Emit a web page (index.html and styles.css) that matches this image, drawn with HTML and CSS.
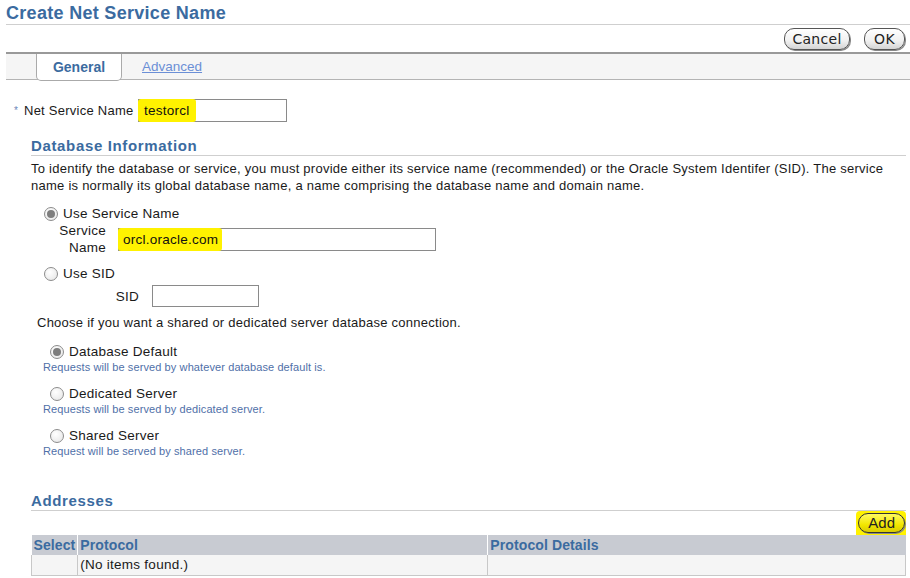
FILE: index.html
```html
<!DOCTYPE html>
<html>
<head>
<meta charset="utf-8">
<title>Create Net Service Name</title>
<link rel="stylesheet" href="styles.css">
</head>
<body>
<div class="page">
  <h1 class="title">Create Net Service Name</h1>
  <div class="actions">
    <button class="btn btn-cancel">Cancel</button>
    <button class="btn btn-ok">OK</button>
  </div>
  <div class="tabs">
    <div class="tab active">General</div>
    <a class="tab link" href="#">Advanced</a>
  </div>

  <div class="nsn-row">
    <span class="req">*</span>
    <span class="nsn-label">Net Service Name</span>
    <div class="field nsn-field"><span class="hl">testorcl</span></div>
  </div>

  <section class="section">
    <h2 class="section-title">Database Information</h2>
    <p class="desc">To identify the database or service, you must provide either its service name (recommended) or the Oracle System Identifer (SID). The service name is normally its global database name, a name comprising the database name and domain name.</p>

    <div class="radio-line first"><span class="radio checked"></span><span>Use Service Name</span></div>
    <div class="labeled svc-row">
      <span class="lbl svc-lbl">Service<br>Name</span>
      <div class="field svc-field"><span class="hl">orcl.oracle.com</span></div>
    </div>

    <div class="radio-line sid-radio"><span class="radio"></span><span>Use SID</span></div>
    <div class="labeled sid-row">
      <span class="lbl sid-lbl">SID</span>
      <div class="field sid-field"></div>
    </div>

    <p class="choose">Choose if you want a shared or dedicated server database connection.</p>

    <div class="opt">
      <div class="radio-line opt-line"><span class="radio checked"></span><span>Database Default</span></div>
      <div class="hint">Requests will be served by whatever database default is.</div>
    </div>
    <div class="opt">
      <div class="radio-line opt-line"><span class="radio"></span><span>Dedicated Server</span></div>
      <div class="hint">Requests will be served by dedicated server.</div>
    </div>
    <div class="opt">
      <div class="radio-line opt-line"><span class="radio"></span><span>Shared Server</span></div>
      <div class="hint">Request will be served by shared server.</div>
    </div>
  </section>

  <section class="section addresses">
    <h2 class="section-title">Addresses</h2>
    <div class="table-actions"><span class="btn-hl"><button class="btn btn-add">Add</button></span></div>
    <table class="grid">
      <thead>
        <tr><th class="c-sel">Select</th><th class="c-proto">Protocol</th><th class="c-det">Protocol Details</th></tr>
      </thead>
      <tbody>
        <tr><td></td><td>(No items found.)</td><td></td></tr>
      </tbody>
    </table>
  </section>
</div>
</body>
</html>
```

FILE: styles.css
```css
* { box-sizing: border-box; }
html, body { margin: 0; padding: 0; background: #fff; }
body {
  font-family: "Liberation Sans", Arial, sans-serif;
  font-size: 13px;
  letter-spacing: 0.25px;
  color: #1a1a1a;
}
.page { padding-left: 6px; width: 910px; }

.title {
  margin: 2px 0 0 0;
  font-size: 18px;
  line-height: 22px;
  font-weight: bold;
  letter-spacing: 0.3px;
  color: #3b6ba0;
  border-bottom: 1px solid #cfcfcf;
}

.actions {
  display: flex;
  justify-content: flex-end;
  gap: 14px;
  margin-top: 3px;
  padding-right: 5px;
  height: 22px;
}
.btn {
  font-family: "DejaVu Sans", sans-serif;
  font-size: 14px;
  letter-spacing: 0.3px;
  line-height: 18px;
  height: 22px;
  padding: 0;
  border: 1px solid #555;
  border-radius: 10px;
  background: linear-gradient(#ffffff, #f0f0f0 60%, #d4d4d4);
  color: #222;
  box-shadow: 1px 1px 0 #888;
}
.btn-cancel { width: 66px; }
.btn-ok { width: 41px; }

.tabs {
  display: flex;
  margin-top: 2px;
  height: 28px;
  border-top: 2px solid #999;
  border-bottom: 1px solid #b4b4b4;
  background: #f5f5f5;
}
.tab {
  height: 26px;
  font-size: 14px;
  line-height: 26px;
}
.tab.active {
  margin-left: 30px;
  width: 86px;
  margin-bottom: -1px;
  height: 27px;
  background: #fff;
  border: 1px solid #aaa;
  border-top: none;
  border-radius: 0 0 5px 5px;
  text-align: center;
  font-weight: bold;
  letter-spacing: 0;
  color: #3b6ba0;
}
.tab.link {
  margin-left: 20px;
  font-size: 13.5px;
  letter-spacing: 0;
  color: #6b8fd6;
  text-decoration: underline;
}

.nsn-row {
  display: flex;
  align-items: center;
  margin-top: 19px;
  height: 23px;
}
.req {
  margin-left: 8px;
  width: 10px;
  color: #6b86b8;
  font-size: 10px;
}
.nsn-label { width: 114px; }

.field {
  display: flex;
  border: 1px solid #8a8a8a;
  background: #fff;
}
.hl {
  background: #fff200;
  margin: -1px 0 -1px -1px;
  padding: 0 6px 0 6px;
  border-radius: 3px;
  line-height: 23px;
  font-size: 13.5px;
  color: #111;
}
.nsn-field { width: 149px; height: 23px; }
.svc-field .hl { padding: 0 4px 0 5px; }

.section { margin-left: 25px; padding-right: 4px; }
.section-title {
  margin: 15px 0 0 0;
  font-size: 15px;
  line-height: 18px;
  font-weight: bold;
  letter-spacing: 0.65px;
  color: #3b6ba0;
  border-bottom: 1px solid #cfcfcf;
}
.desc {
  margin: 4px 0 0 0;
  line-height: 17px;
}

.radio-line {
  display: flex;
  align-items: center;
  gap: 5px;
  line-height: 17px;
  font-size: 13.5px;
}
.radio-line.first { margin: 11px 0 0 13px; }
.radio {
  position: relative;
  width: 14px;
  height: 14px;
  border-radius: 50%;
  border: 1px solid #8c8c8c;
  background: radial-gradient(circle at 40% 35%, #ffffff, #e4e4e4);
  flex: none;
}
.radio.checked::after {
  content: "";
  position: absolute;
  left: 2px;
  top: 2px;
  width: 8px;
  height: 8px;
  border-radius: 50%;
  background: #7d7d7d;
}

.labeled { display: flex; align-items: center; }
.lbl { text-align: right; font-size: 13.5px; line-height: 17px; }
.svc-row { margin-top: 0; }
.svc-lbl { width: 75px; }
.svc-field { margin-left: 12px; width: 318px; height: 23px; }
.sid-radio { margin: 9px 0 0 13px; }
.sid-row { margin-top: 3px; }
.sid-lbl { width: 108px; }
.sid-field { margin-left: 13px; width: 107px; height: 22px; }

.choose {
  margin: 7px 0 0 6px;
  line-height: 17px;
}
.opt { margin: 12px 0 0 12px; }
.opt + .opt { margin-top: 11px; }
.opt-line { margin-left: 7px; }
.hint {
  font-size: 11px;
  letter-spacing: 0.1px;
  line-height: 14px;
  color: #4f6fa8;
}

.addresses .section-title { margin-top: 34px; }
.table-actions {
  display: flex;
  justify-content: flex-end;
  margin-top: 0;
}
.btn-hl {
  display: inline-block;
  background: #fff200;
  padding: 2px 1px 2px 2px;
  border-radius: 4px 4px 0 0;
}
.btn-add {
  height: 20px;
  line-height: 16px;
  font-family: "Liberation Sans", Arial, sans-serif;
  font-size: 15px;
  letter-spacing: 0;
  padding: 0 9px;
  background: linear-gradient(#fffa60, #f2e600 60%, #d8cc00);
  border-color: #333;
}

.grid {
  width: 100%;
  border-collapse: collapse;
}
.grid th {
  background: #c8cbd2;
  color: #3b6ba0;
  font-size: 14px;
  letter-spacing: 0.1px;
  text-align: left;
  height: 20px;
  padding: 0 2px;
  border-left: 1px solid #fff;
}
.grid th:first-child { border-left: none; }
.grid td {
  background: #f5f5f5;
  height: 20px;
  padding: 0 2px;
  font-size: 13.5px;
  border: 1px solid #c8c8c8;
  border-top: none;
}
.c-sel { width: 46px; }
.c-proto { width: 410px; }
```
